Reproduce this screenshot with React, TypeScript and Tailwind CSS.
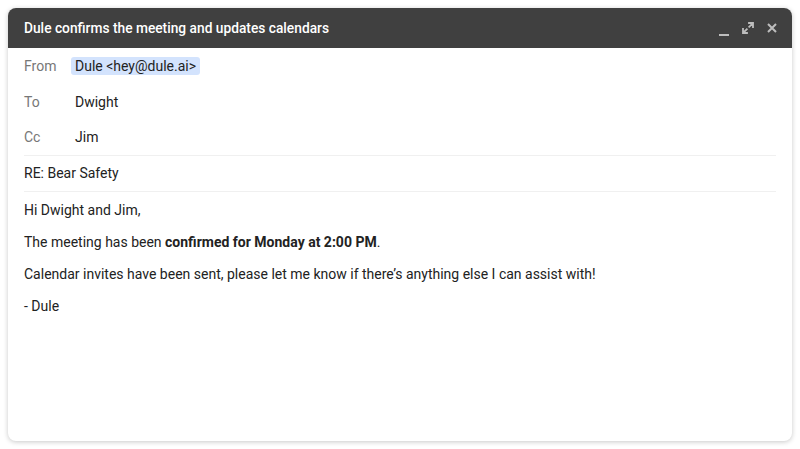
import React from "react";

export default function App() {
  return (
    <div className="w-[800px] h-[449px] bg-white p-2" style={{ fontFamily: "Roboto, 'Noto Sans', sans-serif" }}>
      <div className="h-[433px] rounded-lg bg-white shadow-[0_1px_5px_rgba(0,0,0,0.22)] flex flex-col overflow-hidden">
        <div className="h-10 bg-[#404040] flex items-center justify-between pl-4 pr-[14px] shrink-0">
          <span className="text-white text-[13.75px] font-medium">Dule confirms the meeting and updates calendars</span>
          <div className="flex items-center gap-3 text-[#bdbdbd]">
            <svg width="12" height="12" viewBox="0 0 12 12" className="mt-[6px]">
              <rect x="1" y="9" width="10" height="2" fill="currentColor" />
            </svg>
            <svg width="12" height="12" viewBox="0 0 12 12">
              <path d="M7 1h4v4M11 1L7.2 4.8M5 11H1V7M1 11l3.8-3.8" stroke="currentColor" strokeWidth="1.8" fill="none" strokeLinecap="square" />
            </svg>
            <svg width="12" height="12" viewBox="0 0 12 12">
              <path d="M2 2l8 8M10 2l-8 8" stroke="currentColor" strokeWidth="2" fill="none" />
            </svg>
          </div>
        </div>
        <div className="px-4 text-[14px] text-[#222]">
          <div className="h-9 flex items-center">
            <span className="w-[47px] text-[#777]">From</span>
            <span className="bg-[#d3e3fd] rounded-[3px] px-1 leading-[18px]">Dule &lt;hey@dule.ai&gt;</span>
          </div>
          <div className="h-9 flex items-center">
            <span className="w-[51px] text-[#777]">To</span>
            <span>Dwight</span>
          </div>
          <div className="h-9 flex items-center border-b border-[#f0f0f0]">
            <span className="w-[51px] text-[#777]">Cc</span>
            <span>Jim</span>
          </div>
          <div className="h-9 flex items-center border-b border-[#f0f0f0]">
            <span>RE: Bear Safety</span>
          </div>
          <div className="pt-2 flex flex-col gap-3 leading-5">
            <p>Hi Dwight and Jim,</p>
            <p>
              The meeting has been <span className="font-bold">confirmed for Monday at 2:00 PM</span>.
            </p>
            <p>Calendar invites have been sent, please let me know if there’s anything else I can assist with!</p>
            <p>- Dule</p>
          </div>
        </div>
      </div>
    </div>
  );
}
